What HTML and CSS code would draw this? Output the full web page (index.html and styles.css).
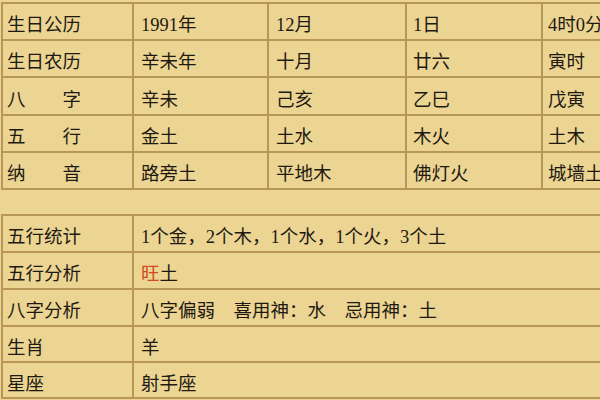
FILE: index.html
```html
<!DOCTYPE html>
<html lang="zh-CN">
<head>
<meta charset="utf-8">
<title>八字</title>
<link rel="stylesheet" href="styles.css">
</head>
<body>
<div class="page">
  <div class="grid top">
    <div class="c c1">生日公历</div><div class="c c2">1991年</div><div class="c c3">12月</div><div class="c c4">1日</div><div class="c c5">4时0分</div>
    <div class="c c1">生日农历</div><div class="c c2">辛未年</div><div class="c c3">十月</div><div class="c c4">廿六</div><div class="c c5">寅时</div>
    <div class="c c1">八　　字</div><div class="c c2">辛未</div><div class="c c3">己亥</div><div class="c c4">乙巳</div><div class="c c5">戊寅</div>
    <div class="c c1">五　　行</div><div class="c c2">金土</div><div class="c c3">土水</div><div class="c c4">木火</div><div class="c c5">土木</div>
    <div class="c c1">纳　　音</div><div class="c c2">路旁土</div><div class="c c3">平地木</div><div class="c c4">佛灯火</div><div class="c c5">城墙土</div>
  </div>
  <div class="grid bottom">
    <div class="c c1">五行统计</div><div class="c c2">1个金，2个木，1个水，1个火，3个土</div>
    <div class="c c1">五行分析</div><div class="c c2"><span class="red">旺</span>土</div>
    <div class="c c1">八字分析</div><div class="c c2">八字偏弱　喜用神：水　忌用神：土</div>
    <div class="c c1">生肖</div><div class="c c2">羊</div>
    <div class="c c1">星座</div><div class="c c2">射手座</div>
  </div>
</div>
</body>
</html>
```

FILE: styles.css
```css
html, body {
  margin: 0;
  padding: 0;
  overflow: hidden;
  background: #ecd493;
}
.page {
  width: 600px;
  height: 400px;
  overflow: hidden;
  padding: 2px 0 0 1px;
  box-sizing: border-box;
  font-family: "Liberation Serif", "Noto Sans CJK SC", serif;
  font-size: 18.5px;
  color: #1e1a12;
}
.grid {
  display: grid;
  background: #b8965a;
  padding: 2px;
  gap: 2px;
  width: max-content;
}
.top {
  grid-template-columns: 129px 133px 136px 134px 140px;
  grid-template-rows: 35px 35px 36px 35px 35px;
}
.bottom {
  margin-top: 24px;
  grid-template-columns: 129px 551px;
  grid-template-rows: 35px 35px 35px 34px 34px;
}
.c {
  background: #ecd493;
  display: flex;
  align-items: center;
  padding-top: 3px;
  box-sizing: border-box;
  white-space: nowrap;
  overflow: hidden;
}
.c1 { padding-left: 4px; font-family: "Noto Sans CJK SC", sans-serif; }
.c2 { padding-left: 7px; }
.c3 { padding-left: 7px; }
.c4 { padding-left: 6px; }
.c5 { padding-left: 5px; }
.red { color: #cf4a1e; }
```
